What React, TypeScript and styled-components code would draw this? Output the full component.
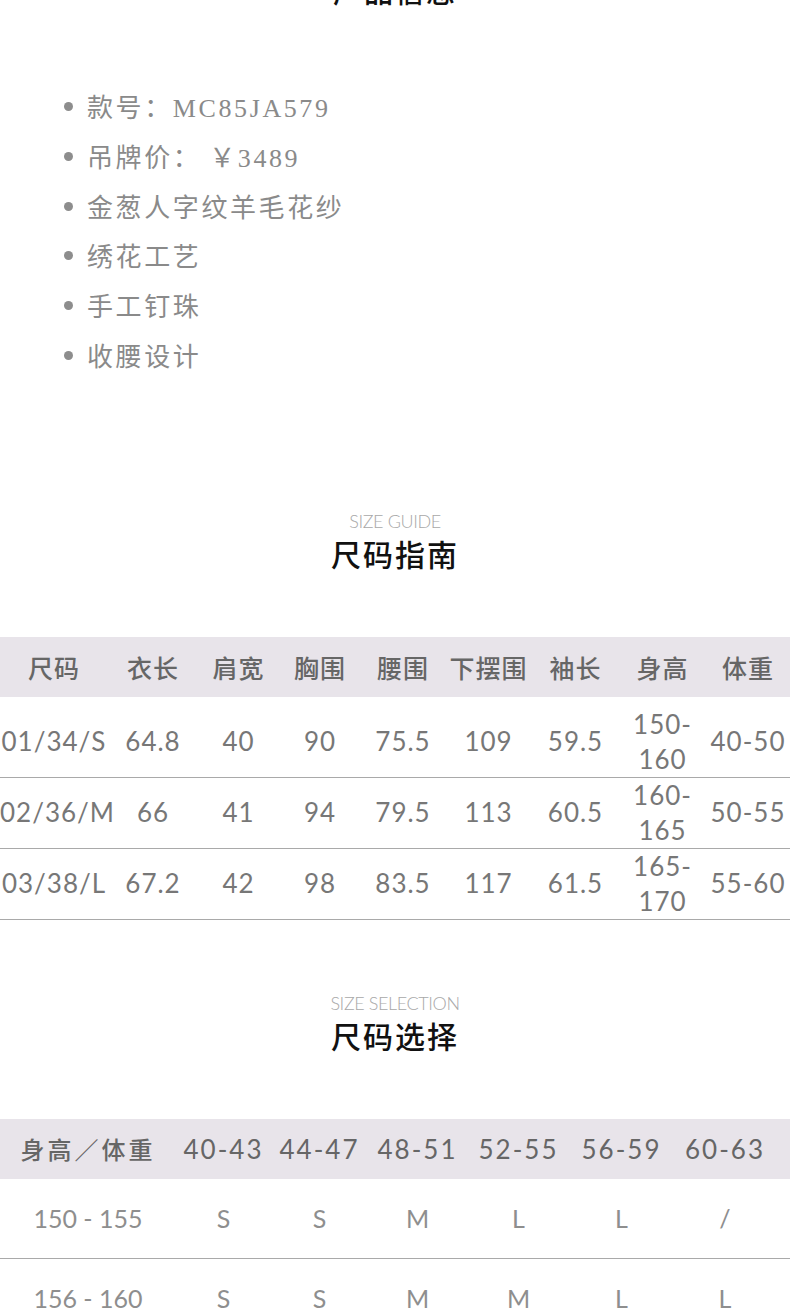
import React from "react"
import styled, { createGlobalStyle } from "styled-components"

const GlobalStyle = createGlobalStyle`
  html, body {
    margin: 0;
    padding: 0;
    background: #fff;
    overflow: hidden;
  }
  body {
    font-family: "Noto Sans CJK SC", sans-serif;
  }
`

const Page = styled.div`
  width: 790px;
  height: 1314px;
  overflow: hidden;
  background: #fff;
`

const TopTitle = styled.h2`
  margin: -28px 0 0;
  height: 36px;
  text-align: center;
  font: 500 29px/36px "Noto Sans CJK SC", sans-serif;
  color: #111;
  letter-spacing: 2px;
`

const InfoList = styled.ul`
  margin: 73px 0 0;
  padding: 0 0 0 87px;
  list-style: none;
`

const InfoItem = styled.li`
  position: relative;
  height: 49.8px;
  line-height: 50px;
  font-size: 26px;
  letter-spacing: 2.6px;
  color: #8a8a8a;
  font-family: "Liberation Serif", "Noto Sans CJK SC", serif;
  &::before {
    content: "";
    position: absolute;
    left: -23px;
    top: 21px;
    width: 9px;
    height: 9px;
    border-radius: 50%;
    background: #8d8d8d;
  }
`

const CjkText = styled.span`
  font-family: "Noto Sans CJK SC", sans-serif;
`

const SectionHead = styled.div<{ $top: number }>`
  margin-top: ${(p) => p.$top}px;
  display: flex;
  flex-direction: column;
  align-items: center;
`

const SubTitle = styled.div`
  font: 300 18px/22px Lato, "Open Sans", sans-serif;
  color: #a8a8a8;
  letter-spacing: -0.4px;
`

const MainTitle = styled.div`
  margin-top: 1px;
  font: 500 30px/40px "Noto Sans CJK SC", sans-serif;
  color: #111;
  letter-spacing: 2px;
`

const Table = styled.div<{ $top: number }>`
  margin-top: ${(p) => p.$top}px;
`

const Row = styled.div<{ $cols: string; $head?: boolean; $height: number; $padTop?: number }>`
  display: grid;
  grid-template-columns: ${(p) => p.$cols};
  align-items: center;
  height: ${(p) => p.$height}px;
  box-sizing: border-box;
  padding-top: ${(p) => p.$padTop ?? 0}px;
  background: ${(p) => (p.$head ? "#e8e4ea" : "#fff")};
  border-bottom: ${(p) => (p.$head ? "none" : "1px solid #a9a9a9")};
`

const HeadCell = styled.div<{ $spaced?: boolean }>`
  text-align: center;
  font-family: "Noto Sans CJK SC", sans-serif;
  font-weight: 500;
  font-size: ${(p) => (p.$spaced ? "24px" : "25px")};
  line-height: 30px;
  color: #666;
  letter-spacing: ${(p) => (p.$spaced ? "3px" : "1px")};
  white-space: nowrap;
`

const HeadNum = styled.span`
  font-family: Lato, sans-serif;
  font-weight: 400;
  font-size: 26px;
  letter-spacing: 2px;
  color: #666;
`

const Cell = styled.div<{ $light?: boolean }>`
  text-align: center;
  font-family: Lato, sans-serif;
  font-size: ${(p) => (p.$light ? "25px" : "26px")};
  line-height: 35px;
  color: ${(p) => (p.$light ? "#8e8e8e" : "#777")};
  letter-spacing: ${(p) => (p.$light ? "0px" : "1px")};
  white-space: pre;
`

const guideCols = "108px 90px 81px 82px 84px 87px 87px 87px 84px"
const guideHead = ["尺码", "衣长", "肩宽", "胸围", "腰围", "下摆围", "袖长", "身高", "体重"]
const guideRows = [
  ["01/34/S", "64.8", "40", "90", "75.5", "109", "59.5", "150-160", "40-50"],
  ["02/36/M", "66", "41", "94", "79.5", "113", "60.5", "160-165", "50-55"],
  ["03/38/L", "67.2", "42", "98", "83.5", "117", "61.5", "165-170", "55-60"],
]

const selCols = "176px 95px 97px 99px 103px 103px 104px 1fr"
const selHead = ["身高／体重", "40-43", "44-47", "48-51", "52-55", "56-59", "60-63"]
const selRows = [
  ["150 - 155", "S", "S", "M", "L", "L", "/"],
  ["156 - 160", "S", "S", "M", "M", "L", "L"],
]

const info = [
  { label: "款号：", value: "MC85JA579" },
  { label: "吊牌价：", value: "\u2009￥3489" },
  { label: "金葱人字纹羊毛花纱" },
  { label: "绣花工艺" },
  { label: "手工钉珠" },
  { label: "收腰设计" },
]

// 身高 values wrap after the hyphen in the reference
const splitRange = (v: string) => {
  const i = v.indexOf("-")
  return (
    <>
      {v.slice(0, i + 1)}
      <br />
      {v.slice(i + 1)}
    </>
  )
}

export default function App() {
  return (
    <Page>
      <GlobalStyle />
      <TopTitle>产品信息</TopTitle>
      <InfoList>
        {info.map((it) => (
          <InfoItem key={it.label}>
            <CjkText>{it.label}</CjkText>
            {it.value}
          </InfoItem>
        ))}
      </InfoList>

      <SectionHead $top={130}>
        <SubTitle>SIZE GUIDE</SubTitle>
        <MainTitle>尺码指南</MainTitle>
      </SectionHead>

      <Table $top={64}>
        <Row $cols={guideCols} $head $height={60}>
          {guideHead.map((h) => (
            <HeadCell key={h}>{h}</HeadCell>
          ))}
        </Row>
        {guideRows.map((r, ri) => (
          <Row key={r[0]} $cols={guideCols} $height={ri === 0 ? 81 : 71} $padTop={ri === 0 ? 10 : 0}>
            {r.map((c, ci) => (
              <Cell key={ci}>{ci === 7 ? splitRange(c) : c}</Cell>
            ))}
          </Row>
        ))}
      </Table>

      <SectionHead $top={72}>
        <SubTitle>SIZE SELECTION</SubTitle>
        <MainTitle>尺码选择</MainTitle>
      </SectionHead>

      <Table $top={64}>
        <Row $cols={selCols} $head $height={60}>
          {selHead.map((h, i) => (
            <HeadCell key={h} $spaced={i === 0}>
              {i === 0 ? h : <HeadNum>{h}</HeadNum>}
            </HeadCell>
          ))}
        </Row>
        {selRows.map((r) => (
          <Row key={r[0]} $cols={selCols} $height={80}>
            {r.map((c, ci) => (
              <Cell key={ci} $light>
                {c}
              </Cell>
            ))}
          </Row>
        ))}
      </Table>
    </Page>
  )
}
